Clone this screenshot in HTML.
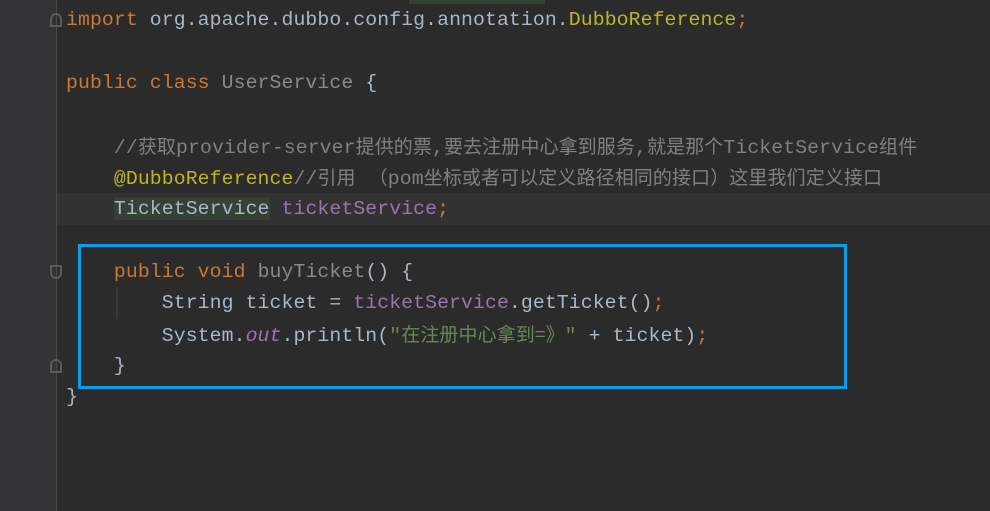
<!DOCTYPE html>
<html><head><meta charset="utf-8"><style>
body{margin:0;width:990px;height:511px;background:#2b2b2b;overflow:hidden;position:relative;font-family:"Liberation Mono","Noto Sans CJK SC",monospace;font-size:19.8px;color:#a9b7c6}
.gut{position:absolute;left:0;top:0;width:56px;height:511px;background:#313335}
.gl{position:absolute;left:56px;top:0;width:1px;height:511px;background:#4a4a4a}
.l{position:absolute;left:66px;white-space:pre;line-height:24px;letter-spacing:0.1px}
.k{color:#cc7832}.g{color:#8a8a8a}.a{color:#bbb529}.c{color:#808080}.p{color:#9876aa}.s{color:#6a8759}
.cj{font-family:"Noto Sans CJK SC",sans-serif;font-size:19px}
.fold{position:absolute;left:50px;width:12px;height:14px;border:2px solid #5a5a5a;box-sizing:border-box}
</style></head><body>
<div class="gut"></div><div class="gl"></div>
<div style="position:absolute;left:409px;top:0;width:136px;height:4px;background:#344134"></div>
<div style="position:absolute;left:57px;top:193px;width:933px;height:32px;background:#323232"></div>
<div class="fold" style="top:13px;border-radius:6px 6px 0 0"></div>
<div class="fold" style="top:265px;border-radius:0 0 6px 6px"></div>
<div class="fold" style="top:359px;border-radius:6px 6px 0 0"></div>
<div style="position:absolute;left:116px;top:287px;width:2px;height:32px;background:#3a3a3a"></div>
<div class="l" style="top:8px"><span class="k">import</span> org.apache.dubbo.config.annotation.<span class="a">DubboReference</span><span class="k">;</span></div>
<div class="l" style="top:71px"><span class="k">public class</span> <span class="g">UserService</span> {</div>
<div class="l c" style="top:134px">    //<span class="cj">获取</span>provider-server<span class="cj">提供的票</span>,<span class="cj">要去注册中心拿到服务</span>,<span class="cj">就是那个</span>TicketService<span class="cj">组件</span></div>
<div class="l" style="top:165px">    <span class="a">@DubboReference</span><span class="c">//<span class="cj">引用   （</span>pom<span class="cj">坐标或者可以定义路径相同的接口）这里我们定义接口</span></span></div>
<div class="l" style="top:197px">    <span style="background:#344134">TicketService</span> <span class="p">ticketService</span><span class="k">;</span></div>
<div class="l" style="top:260px">    <span class="k">public void</span> <span class="g">buyTicket</span>() {</div>
<div class="l" style="top:291px">        String ticket = <span class="p">ticketService</span>.getTicket()<span class="k">;</span></div>
<div class="l" style="top:322px">        System.<span class="p" style="font-style:italic">out</span>.println(<span class="s">"<span class="cj">在注册中心拿到=》</span>"</span> + ticket)<span class="k">;</span></div>
<div class="l" style="top:354px">    }</div>
<div class="l" style="top:385px">}</div>
<div style="position:absolute;left:78px;top:244px;width:769px;height:145px;border:3px solid #0a9ee8;box-sizing:border-box"></div>
</body></html>
